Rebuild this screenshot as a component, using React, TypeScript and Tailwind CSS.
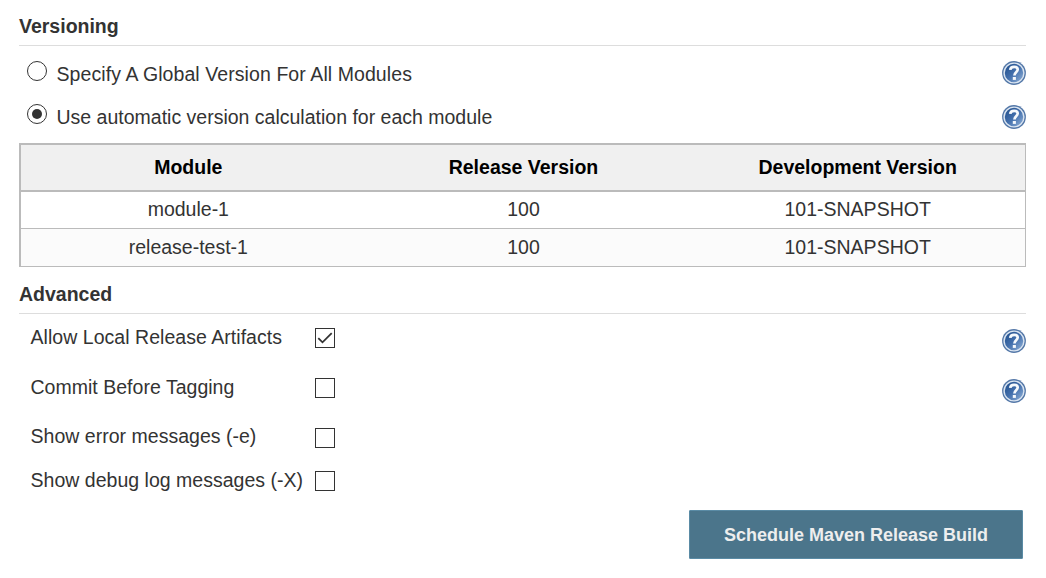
import { useState } from "react";

function HelpIcon({ className }: { className: string }) {
  return (
    <svg viewBox="0 0 24 24" className={`size-6 shrink-0 ${className}`} role="img" aria-label="Help">
      <defs>
        <linearGradient id="helpFill" x1="0.1" y1="0.1" x2="0.9" y2="0.9">
          <stop offset="0" stopColor="#24528f" />
          <stop offset="0.5" stopColor="#4470ad" />
          <stop offset="1" stopColor="#86a8d2" />
        </linearGradient>
      </defs>
      <circle cx="12" cy="12" r="11.9" fill="#5478a8" />
      <circle cx="12" cy="12" r="9.9" fill="url(#helpFill)" stroke="#dbe5f1" strokeWidth="1.4" />
      <path
        d="M8.2 8.9C8.4 6.7 9.8 5.8 12.1 5.8c2.3 0 3.6 1.1 3.6 2.8 0 2.6-3.3 2.9-3.3 5.9"
        fill="none"
        stroke="#f6f9fc"
        strokeWidth="2.7"
      />
      <rect x="10.8" y="16" width="3.1" height="2.9" fill="#f6f9fc" />
    </svg>
  );
}

function SectionTitle({ children, className }: { children: string; className: string }) {
  return (
    <h2 className={`border-b border-[#dddddd] text-[19.5px] leading-6 font-bold ${className}`}>{children}</h2>
  );
}

const modes = [
  { label: "Specify A Global Version For All Modules", row: "h-[43px]", help: "mt-[15px]", text: "tracking-[0.08px]" },
  { label: "Use automatic version calculation for each module", row: "h-[54px]", help: "mt-4", text: "tracking-normal" },
];

const modules = [
  { name: "module-1", release: "100", dev: "101-SNAPSHOT", row: "h-[37px] bg-white pt-[5px]" },
  { name: "release-test-1", release: "100", dev: "101-SNAPSHOT", row: "h-[38px] bg-[#fbfbfb] pt-[6px]" },
];

const options = [
  { label: "Allow Local Release Artifacts", row: "h-[50px]", text: "mt-[11px] tracking-[0.04px]", help: true },
  { label: "Commit Before Tagging", row: "h-[50px]", text: "mt-[11px] tracking-[0.02px]", help: true },
  { label: "Show error messages (-e)", row: "h-[43px]", text: "mt-[10px] tracking-[0.02px]", help: false },
  { label: "Show debug log messages (-X)", row: "h-[53px]", text: "mt-[11px] tracking-[0.02px]", help: false },
];

export default function App() {
  const [mode, setMode] = useState(1);
  const [checked, setChecked] = useState([true, false, false, false]);

  return (
    <main className="h-[578px] w-[1046px] overflow-hidden bg-white pr-5 pl-[19px] font-['Liberation_Sans',Arial,sans-serif] text-[19.5px] leading-6 text-[#333333]">
      <SectionTitle className="h-[46px] pt-[14px]">Versioning</SectionTitle>
      {modes.map((m, i) => (
        <div key={m.label} className={`flex items-start justify-between pl-2 ${m.row}`}>
          <label className="flex items-start">
            <input type="radio" name="mode" className="sr-only" checked={mode === i} onChange={() => setMode(i)} />
            <svg viewBox="0 0 20 20" className="mt-[15px] size-5 shrink-0">
              <circle cx="10" cy="10" r="9.5" fill="#fff" stroke="#333" strokeWidth="1" />
              {mode === i && <circle cx="10" cy="10" r="5" fill="#333" />}
            </svg>
            <span className={`mt-4 ml-[9.5px] whitespace-nowrap ${m.text}`}>{m.label}</span>
          </label>
          <HelpIcon className={m.help} />
        </div>
      ))}

      <div className="border-t-2 border-r border-l-2 border-[#bbbbbb] text-center">
        <div className="grid h-[47px] grid-cols-3 border-b-2 border-[#bbbbbb] bg-[#f0f0f0] pt-[10px] font-bold text-black">
          <span>Module</span>
          <span className="pl-px">Release Version</span>
          <span>Development Version</span>
        </div>
        {modules.map((m) => (
          <div key={m.name} className={`grid grid-cols-3 border-b border-[#bbbbbb] ${m.row}`}>
            <span>{m.name}</span>
            <span className="pl-px">{m.release}</span>
            <span>{m.dev}</span>
          </div>
        ))}
      </div>

      <SectionTitle className="h-[47px] pt-[15px]">Advanced</SectionTitle>
      {options.map((o, i) => (
        <div key={o.label} className={`flex items-start justify-between pl-[11.5px] ${o.row}`}>
          <label className="flex items-start">
            <span className={`w-[284.5px] whitespace-nowrap ${o.text}`}>{o.label}</span>
            <input
              type="checkbox"
              className="sr-only"
              checked={checked[i]}
              onChange={() => setChecked(checked.map((c, j) => (j === i ? !c : c)))}
            />
            <svg viewBox="0 0 20 20" className="mt-[14px] size-5 shrink-0">
              <rect x="0.5" y="0.5" width="19" height="19" fill="#fff" stroke="#333" />
              {checked[i] && <path d="M3.3 10.1 7.5 14.3 16.7 5.2" fill="none" stroke="#333" strokeWidth="1.8" />}
            </svg>
          </label>
          {o.help && <HelpIcon className="mt-[15px]" />}
        </div>
      ))}

      <div className="flex justify-end pr-[3px]">
        <button className="h-[49px] w-[334px] rounded-[1px] border border-[#5a8ba5] bg-[#4b758b] text-[18px] leading-6 font-bold text-[#eeeeee]">
          Schedule Maven Release Build
        </button>
      </div>
    </main>
  );
}
